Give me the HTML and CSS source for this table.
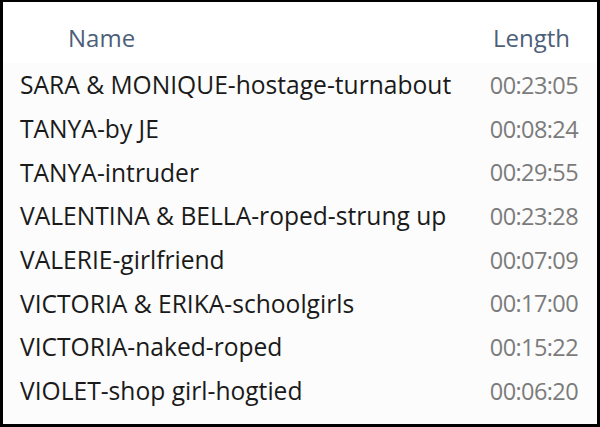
FILE: index.html
```html
<!DOCTYPE html>
<html lang="en">
<head>
    <meta charset="UTF-8">
    <title>Files</title>
    <link rel="stylesheet" href="styles.css">
</head>
<body>
    <div class="frame">
        <div class="list-header">
            <div class="col-name">Name</div>
            <div class="col-length">Length</div>
        </div>
        <div class="rows">
            <div class="row"><span class="name">SARA &amp; MONIQUE-hostage-turnabout</span><span class="length">00:23:05</span></div>
            <div class="row"><span class="name">TANYA-by JE</span><span class="length">00:08:24</span></div>
            <div class="row"><span class="name">TANYA-intruder</span><span class="length">00:29:55</span></div>
            <div class="row"><span class="name">VALENTINA &amp; BELLA-roped-strung up</span><span class="length">00:23:28</span></div>
            <div class="row"><span class="name">VALERIE-girlfriend</span><span class="length">00:07:09</span></div>
            <div class="row"><span class="name">VICTORIA &amp; ERIKA-schoolgirls</span><span class="length">00:17:00</span></div>
            <div class="row"><span class="name">VICTORIA-naked-roped</span><span class="length">00:15:22</span></div>
            <div class="row"><span class="name">VIOLET-shop girl-hogtied</span><span class="length">00:06:20</span></div>
        </div>
    </div>
</body>
</html>
```

FILE: styles.css
```css
:root {
    --border: #000000;
    --background: #fcfcfc;
    --header-text: #4d5f78;
    --text: #1a1a1a;
    --muted: #7b7b7b;
}

* {
    margin: 0;
    padding: 0;
    box-sizing: border-box;
}

body {
    font-family: 'Open Sans', 'Noto Sans', sans-serif;
    background: var(--background);
    color: var(--text);
}

.frame {
    width: 600px;
    height: 427px;
    border-style: solid;
    border-color: var(--border);
    border-width: 2px 3px 3px 3px;
    background: var(--background);
    display: flex;
    flex-direction: column;
}

.list-header {
    display: flex;
    height: 61px;
    align-items: center;
    padding: 10px 0 0 65px;
    background: #ffffff;
    color: var(--header-text);
    font-size: 24px;
}

.col-name {
    flex: 1;
}

.col-length {
    width: 104px;
}

.rows {
    display: flex;
    flex-direction: column;
}

.row {
    display: flex;
    align-items: center;
    height: 43.7px;
    padding: 0 19px 0 17px;
    font-size: 24.6px;
}

.row .name {
    flex: 1;
}

.row .length {
    color: var(--muted);
    font-size: 23.5px;
    letter-spacing: -0.6px;
}
```
